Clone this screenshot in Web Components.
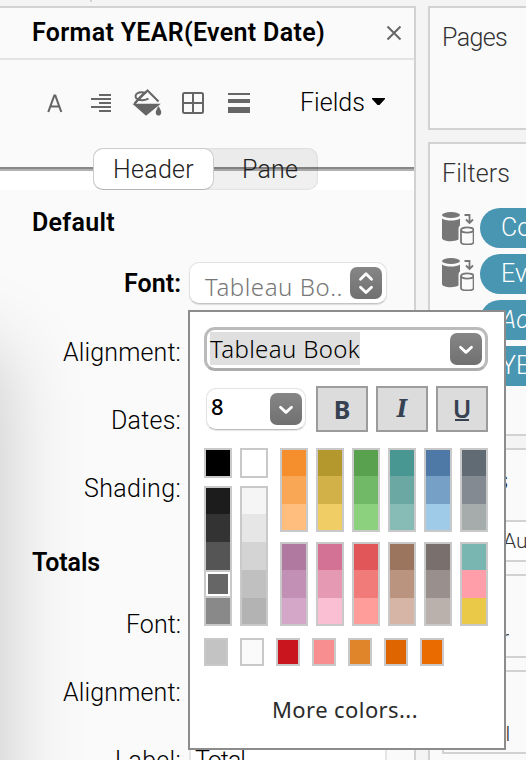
<!DOCTYPE html>
<html lang="en">
<head>
<meta charset="utf-8">
<title>Format pane</title>
<style>
html,body{margin:0;height:760px;overflow:hidden;background:#f4f4f4}
body{font:350 25px/34px Roboto,"Liberation Sans",sans-serif;color:#000}
</style>
</head>
<body>
<format-app></format-app>
<script>
const define = (name, html, setup) => {
  const t = document.createElement('template');
  t.innerHTML = html;
  customElements.define(name, class extends HTMLElement {
    connectedCallback() {
      if (this.shadowRoot) return;
      this.attachShadow({ mode: 'open' }).append(t.content.cloneNode(true));
      if (setup) setup.call(this, this.shadowRoot);
    }
  });
};

/* A single line of text tracked to fill the width given in "w". */
define('fit-text', `<style>:host{display:inline-block;white-space:nowrap;flex:none}span{display:inline-block;white-space:pre}</style><span><slot></slot></span>`,
function (root) {
  const w = +this.getAttribute('w');
  if (!w) return;
  const s = root.querySelector('span');
  const n = this.textContent.length;
  s.style.letterSpacing = (w - s.getBoundingClientRect().width) / n + 'px';
});

define('tool-icons', `<style>
:host{display:flex;align-items:center}svg{display:block}</style>
<svg width="260" height="40" viewBox="0 0 260 40" fill="none" stroke="#666" stroke-width="2">
<path d="M9 30 15 13.500h1L22 30M11.300 24.500h8.400" stroke-width="2.100" transform="translate(-.7 0)"/>
<path d="M59 13h12M51 17h20M59 21h12M51 25h20M59 29h12"/>
<g><path d="M94.500 21.500 107.500 8.500 118.500 19.500"/><path d="M106 11C98 8.500 93.500 13 96.500 16.500C99 19 106 18.500 108.500 16.500M94.500 22C98 18 101 12.500 106.500 10"/><path d="M95 22.700H118L106 32.500Z" fill="#666"/><path d="M118.500 24C116.300 28 115.800 29 115.800 30.400C115.800 34.600 121.200 34.600 121.200 30.400C121.200 29 120.700 28 118.500 24Z" fill="#666" stroke="none"/></g>
<path d="M144 12.500q0-1.500 1.500-1.500h17q1.500 0 1.500 1.500v17q0 1.500-1.500 1.500h-17q-1.500 0-1.500-1.500ZM154 11v20M143 21h20" transform="translate(-1 0)"/>
<path d="M188 12h22" stroke-width="2"/><path d="M188 19h22" stroke-width="4"/><path d="M188 28h22" stroke-width="6"/>
</svg>`);

define('pane-tabs', `<style>
:host{display:block;height:42px;padding-left:93px;background:linear-gradient(#fafafa 19px,#888 19px 21px,#b2b2b2 21px 23px,#fff 23px)}
.g{width:225px;height:42px;box-sizing:border-box;display:flex;border-radius:10px;background:rgba(0,0,0,.06);box-shadow:inset 0 0 2px rgba(0,0,0,.18)}
.t{display:flex;align-items:center;color:#222;height:42px;box-sizing:border-box;padding-top:2px}
.a{width:121px;border:1px solid #ccc;border-bottom-color:#b5b5b5;border-radius:10px;background:#fff;padding-left:19px}
.b{padding-left:28px}
</style><div class="g"><div class="t a"><fit-text w="81">Header</fit-text></div><div class="t b"><fit-text w="56">Pane</fit-text></div></div>`);

define('arrow-button', `<style>
:host{display:block;flex:none;width:32px;height:32px;border-radius:7px;background:linear-gradient(#868686,#707070)}svg{display:block}</style>
<svg width="32" height="32" fill="none" stroke="#fff" stroke-width="2.800" stroke-linecap="round" stroke-linejoin="round"><path/></svg>`,
function (r) {
  r.querySelector('path').setAttribute('d', this.hasAttribute('both') ? 'M10.500 12.200 16 6.800 21.500 12.200M10.500 20.200 16 25.600 21.500 20.200' : 'M10.500 14.300 16 19.400 21.500 14.300');
});

define('form-row', `<style>
:host{display:flex;align-items:center;height:68px}
.l{width:181px;display:flex;justify-content:flex-end;margin-right:8px;padding-top:4px}
:host([strong]) .l{font-weight:600;padding-top:2px}
</style><div class="l"><slot name="label"></slot></div><slot></slot>`);

define('pop-select', `<style>
:host{display:flex;align-items:center;box-sizing:border-box;width:198px;height:42px;padding:0 4px 0 15px;border-radius:10px;background:#fff;border:1px solid #e2e2e2;border-bottom-color:#c4c4c4;box-shadow:0 1px 1px rgba(0,0,0,.12);color:#777;font-family:"Noto Sans",sans-serif;font-size:24px;justify-content:space-between}
fit-text{margin-top:7px}
</style><fit-text w="138">Tableau Bo..</fit-text><arrow-button both></arrow-button>`);

define('format-pane', `<style>
:host{display:block;box-sizing:border-box;height:754px;border:solid #d2d2d2;border-width:2px 2px 0 0;background:#fafafa;position:relative;overflow:hidden}
header{height:50px;border-bottom:2px solid #e4e4e4;display:flex;align-items:center;justify-content:space-between;padding:0 12px 0 32px;font-weight:600}
.bar{height:88px;display:flex;align-items:center;padding:0 29px 4px 40px;box-sizing:border-box}
.bar span{margin-left:auto;display:flex;align-items:center;gap:7px}
.bar fit-text{padding-top:1px}
h2{margin:0;padding:4px 0 0 32px;box-sizing:border-box;display:flex;align-items:center;font:inherit;font-weight:600}
.one{height:59px;padding-top:6px}
.two{height:56px;margin-top:12px}
.shade{position:absolute;left:-200px;top:342px;width:200px;height:700px;box-shadow:0 0 84px rgba(0,0,0,.215)}
.in{width:198px;height:52px;box-sizing:border-box;border:2px solid #e6e6e6;background:#fff;padding:3px 0 0 4px;display:flex;align-items:center}
.body{position:relative}
</style>
<div class="shade"></div>
<header><fit-text w="293">Format YEAR(Event Date)</fit-text><svg width="16" height="16" stroke="#666" stroke-width="2"><path d="M1.500 1.500 14.500 14.500M14.500 1.500 1.500 14.500"/></svg></header>
<div class="bar"><tool-icons></tool-icons><span><fit-text w="65">Fields</fit-text><svg width="13" height="8"><path d="M0 0h13v1L7.500 7h-2L0 1Z" fill="#000"/></svg></span></div>
<pane-tabs></pane-tabs>
<div class="body">
<h2 class="one"><fit-text w="83">Default</fit-text></h2>
<form-row strong><fit-text slot="label" w="57">Font:</fit-text><pop-select></pop-select></form-row>
<form-row><fit-text slot="label" w="118">Alignment:</fit-text></form-row>
<form-row><fit-text slot="label" w="70">Dates:</fit-text></form-row>
<form-row><fit-text slot="label" w="97">Shading:</fit-text></form-row>
<h2 class="two"><fit-text w="68">Totals</fit-text></h2>
<form-row><fit-text slot="label" w="55">Font:</fit-text></form-row>
<form-row><fit-text slot="label" w="118">Alignment:</fit-text></form-row>
<form-row><fit-text slot="label" w="66">Label:</fit-text><div class="in"><fit-text w="50">Total</fit-text></div></form-row>
</div>`);

define('filter-pill', `<style>
:host{display:flex;align-items:center;height:40px;gap:6px}
svg{flex:none;width:32px;height:34px}
.p{width:200px;height:40px;box-sizing:border-box;border-radius:20px;background:#4996b2;color:#fff;padding-left:21px;display:flex;align-items:center;white-space:nowrap}
:host([plain]) svg{visibility:hidden}
:host([calc]) .p{font-style:italic}
</style><svg viewBox="0 0 32 34"><path d="M0 7.500C4 10.300 14 10.300 18 7.500V14.500C16.500 15.500 16.500 17 16.500 19V28.500C12 31.300 0 30.500 0 27Z" fill="#777"/><ellipse cx="9" cy="4" rx="9" ry="3" fill="#777"/><g fill="none" stroke="#777" stroke-width="1.800"><path d="M22.500 4H27.500V11M24 8.500 27.500 12 31 8.500"/><ellipse cx="25.300" cy="19" rx="6.300" ry="2.600"/><path d="M19 19V31C19 34.200 31.600 34.200 31.600 31V19"/></g></svg><div class="p"><slot></slot></div>`);

define('shelf-card', `<style>
:host{display:block;box-sizing:border-box;border:2px solid #d2d2d2;background:#fafafa;color:#333;width:240px}
</style><slot></slot>`);

define('shelf-column', `<style>
:host{display:flex;flex-direction:column;gap:12px}
shelf-card{flex:none}
.t{padding:13px 0 0 12px;height:34px;display:block}
.pages{height:124px}.filters{height:294px}.marks{height:400px}
.list{display:flex;flex-direction:column;gap:6px;padding:17px 0 0 12px}
.marks{padding-left:12px}
.marks .t{padding:14px 0 0;height:56px}
.box{width:220px;box-sizing:border-box;border:2px solid #d2d2d2}
.sel{height:42px;background:#fdfdfd;padding-left:59px;font-size:21px;display:flex;align-items:center}
.cell{height:84px;margin-top:12px;display:flex;align-items:flex-end;padding:0 0 1px 16px;font-size:21px}
</style>
<shelf-card class="pages"><div class="t"><fit-text w="65">Pages</fit-text></div></shelf-card>
<shelf-card class="filters"><div class="t"><fit-text w="68">Filters</fit-text></div>
<div class="list"><filter-pill>Country</filter-pill><filter-pill>Event</filter-pill><filter-pill plain calc>Action</filter-pill><filter-pill plain>YEAR(Event Date)</filter-pill></div></shelf-card>
<shelf-card class="marks"><div class="t"><fit-text w="66">Marks</fit-text></div>
<div class="box sel">Automatic</div><div class="box cell"><fit-text w="49">Color</fit-text></div><div class="box cell"><fit-text w="50">Detail</fit-text></div></shelf-card>`);

define('color-strip', `<style>
:host{display:flex;flex-direction:column;width:28px;box-sizing:border-box;border:2px solid #c9c9c9;background:#c9c9c9}
i{display:block;height:28px;box-sizing:border-box}
i:first-of-type,i:last-of-type{height:26px}
i.sel{border:2px solid #fff;margin:2px 0;height:24px}
:host([small]){width:24px}:host([small]) i{height:24px}
</style>`, function (r) {
  this.getAttribute('colors').split(' ').forEach((c, k) => {
    const i = document.createElement('i');
    i.style.background = c;
    if (this.getAttribute('selected') === String(k)) i.className = 'sel';
    r.append(i);
  });
});

define('style-button', `<style>
:host{display:flex;align-items:center;justify-content:center;box-sizing:border-box;width:52px;height:46px;border:2px solid #9c9c9c;background:#dcdcdc;color:#364152;font:700 25px/30px "Noto Sans",sans-serif}
span{margin-top:-1px}
:host([i]){font:italic 700 25px/30px "DejaVu Serif Condensed","DejaVu Serif",serif}
:host([u]) span{border-bottom:2px solid #364152;line-height:22px;height:22px;width:14px;display:flex;justify-content:center;font-weight:600}
</style><span><slot></slot></span>`);

define('font-popup', `<style>
:host{display:block;position:absolute;left:188px;top:310px;width:318px;height:440px;box-sizing:border-box;border:2px solid #8c8c8c;background:#fff;padding:15px 0 0 14px;font-family:"Noto Sans",sans-serif}
.combo{width:284px;height:44px;box-sizing:border-box;border:3px solid #bbbbbd;border-bottom-color:#adadaf;border-radius:11px;display:flex;align-items:center;justify-content:space-between;padding:0 3px;font-size:24px;background:#fff}
.combo .s{background:#dfdfdf;height:33px;width:150px;display:flex;align-items:center;margin-top:-1px}
.row{display:flex;margin-top:15px;gap:8px;width:284px}
.size{width:100px;height:42px;margin:2px 2px 0 2px;box-sizing:border-box;border:1px solid #e2e2e2;border-bottom-color:#bdbdbd;box-shadow:0 1px 1px rgba(0,0,0,.1);border-radius:10px;display:flex;align-items:center;justify-content:space-between;padding:0 3px 0 4px;font-size:22px;font-weight:500}
.size span{margin-top:-6px}
.pal{display:grid;grid-template-columns:64px 1fr;margin-top:16px}
.gray{display:grid;grid-template-columns:28px 28px;gap:8px}
.gray .one{height:30px}
.hues{margin-left:12px;display:grid;grid-template-columns:repeat(6,28px);gap:10px 8px}
.recent{display:flex;gap:12px;margin-top:12px}
.more{margin-top:26px;padding-left:68px;font-size:22px;font-weight:400;color:#2b2b2b}
</style>
<div class="combo"><div class="s"><fit-text w="150">Tableau Book</fit-text></div><arrow-button></arrow-button></div>
<div class="row"><div class="size"><span>8</span><arrow-button></arrow-button></div><style-button>B</style-button><style-button i>I</style-button><style-button u>U</style-button></div>
<div class="pal"><div class="gray">
<color-strip class="one" colors="#000"></color-strip><color-strip class="one" colors="#fff"></color-strip>
<color-strip selected="3" colors="#1c1c1c #333 #555 #666 #898989"></color-strip><color-strip colors="#f5f5f5 #e6e6e6 #d4d4d4 #c0c0c0 #b3b3b3"></color-strip></div>
<div class="hues">
<color-strip colors="#f58e2c #faa755 #ffbe7e"></color-strip><color-strip colors="#b4982d #d2b248 #f0cd65"></color-strip><color-strip colors="#59a14f #71b966 #8cd17e"></color-strip><color-strip colors="#499793 #6ba8a4 #86bbb6"></color-strip><color-strip colors="#4e79a6 #76a0c6 #a0cbe8"></color-strip><color-strip colors="#616b74 #838a92 #a6acac"></color-strip>
<color-strip colors="#b07aa0 #c28fb5 #d4a6c8"></color-strip><color-strip colors="#d37294 #e699b3 #fabfd2"></color-strip><color-strip colors="#e15759 #f07b79 #ff9d9a"></color-strip><color-strip colors="#9c755f #ba947f #d7b5a6"></color-strip><color-strip colors="#79706e #998f8d #bab0ac"></color-strip><color-strip colors="#79b6b1 #ff9da8 #ebc948"></color-strip></div></div>
<div class="recent"><color-strip small colors="#c3c3c3"></color-strip><color-strip small colors="#fafafa"></color-strip><color-strip small colors="#c9151e"></color-strip><color-strip small colors="#f88e8f"></color-strip><color-strip small colors="#e1852b"></color-strip><color-strip small colors="#de6500"></color-strip><color-strip small colors="#ea6b00"></color-strip></div>
<div class="more"><fit-text w="146">More colors...</fit-text></div>`);

define('format-app', `<style>
:host{display:grid;grid-template-columns:416px 98px;grid-template-rows:754px;column-gap:12px;width:526px;height:760px;box-sizing:border-box;padding-top:6px;position:relative;overflow:hidden;background:linear-gradient(#d2d2d2,#d2d2d2) 90px 0/2px 2px no-repeat #f4f4f4}
</style><format-pane></format-pane><shelf-column></shelf-column><font-popup></font-popup>`);
</script>
</body>
</html>
